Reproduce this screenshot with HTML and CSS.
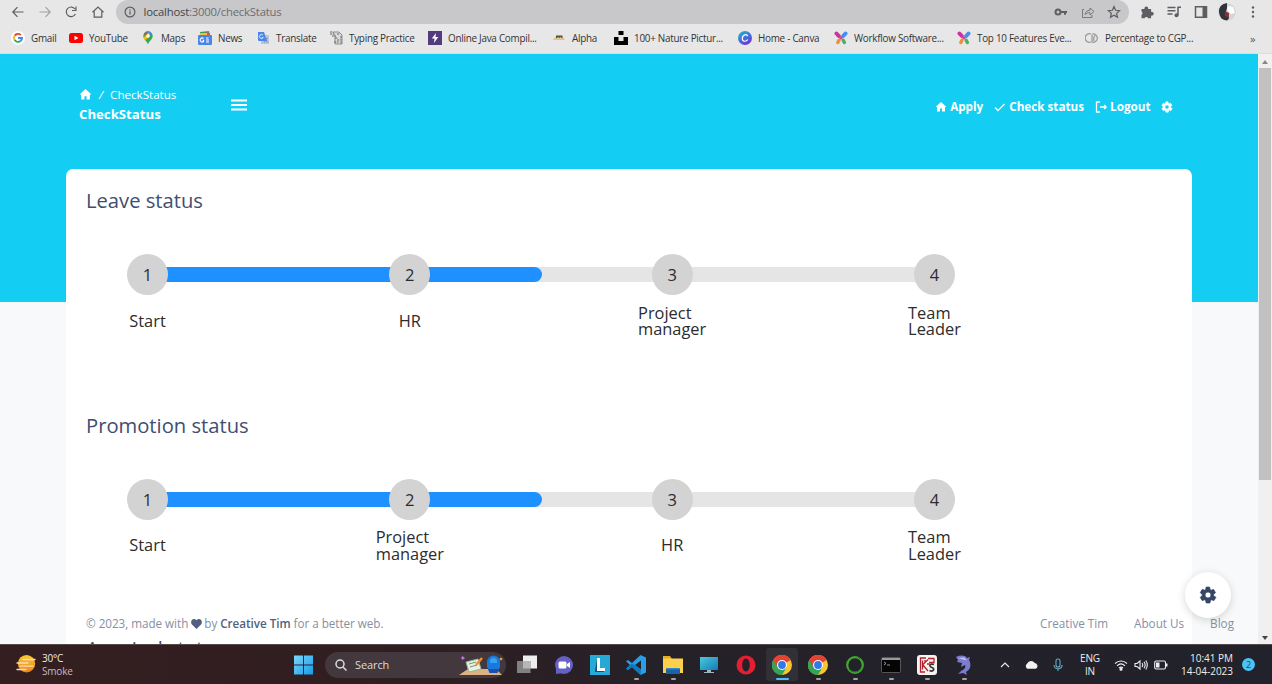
FILE: index.html
```html
<!DOCTYPE html>
<html lang="en">
<head>
<meta charset="utf-8">
<title>CheckStatus</title>
<link rel="stylesheet" href="styles.css">
</head>
<body>
<svg class="defs" width="0" height="0">
  <symbol id="home" viewBox="0 0 24 24"><path fill="currentColor" d="M12 2 1 12h3v9h6v-6h4v6h6v-9h3z"/></symbol>
  <symbol id="gear" viewBox="0 0 24 24"><path fill="currentColor" stroke="currentColor" stroke-width="1" stroke-linejoin="round" d="M19.4 13a7.6 7.6 0 0 0 0-2l2.3-1.7a.5.5 0 0 0 .1-.7l-2.2-3.8a.5.5 0 0 0-.6-.2l-2.7 1a8 8 0 0 0-1.6-1l-.4-2.8a.5.5 0 0 0-.5-.4H9.900a.5.5 0 0 0-.5.4L9 4.600a8 8 0 0 0-1.600 1l-2.700-1a.5.5 0 0 0-.6.2L1.900 8.600a.5.5 0 0 0 .1.700L4.300 11a7.600 7.600 0 0 0 0 2L2 14.700a.5.5 0 0 0-.1.700l2.200 3.800c.1.200.4.300.6.200l2.700-1a8 8 0 0 0 1.600 1l.4 2.800c0 .2.200.4.5.4h4.400c.2 0 .5-.2.5-.4l.4-2.800a8 8 0 0 0 1.600-1l2.700 1c.2.1.5 0 .6-.2l2.200-3.800a.5.5 0 0 0-.1-.7zM12 16a4 4 0 1 1 0-8 4 4 0 0 1 0 8z"/></symbol>
  <symbol id="petals" viewBox="0 0 14 14"><path stroke="#c9359a" stroke-width="4" stroke-linecap="round" d="M2.500 2.500 4.800 5"/><path stroke="#4a8df0" stroke-width="4" stroke-linecap="round" d="M11.500 2.500 9.200 5"/><path stroke="#f58a3c" stroke-width="3.400" stroke-linecap="round" d="M3.800 11.500 5 9.300"/><path stroke="#4dae62" stroke-width="3.400" stroke-linecap="round" d="M10.400 11.500 9.200 9.300"/><circle cx="7" cy="7" r="1.600" fill="#d8478c"/></symbol>
  <symbol id="chrome" viewBox="0 0 20 20"><circle cx="10" cy="10" r="10" fill="#fbc52d"/><path fill="#e34335" d="M10 10 1.300 5A10 10 0 0 1 18.700 5z"/><path fill="#35a554" d="M10 10 1.300 5A10 10 0 0 0 10 20l4.500-7.500z"/><path fill="#e34335" d="M1.300 5 5.700 12.500 10 5h8.700A10 10 0 0 0 1.300 5z"/><circle cx="10" cy="10" r="5" fill="#fff"/><circle cx="10" cy="10" r="3.900" fill="#3178e8"/></symbol>
</svg>

<header class="browser">
  <div class="toolbar">
    <div class="nav">
      <svg viewBox="0 0 14 14"><path d="M12.500 7H2M6.500 2.200 1.800 7l4.700 4.800"/></svg>
      <svg class="faded" viewBox="0 0 14 14"><path d="M1.500 7H12M7.500 2.200 12.200 7l-4.700 4.800"/></svg>
      <svg viewBox="0 0 14 14"><path d="M11.400 9A4.800 4.800 0 1 1 11 4M12 1.500v4H8"/></svg>
      <svg viewBox="0 0 14 14"><path d="M1.500 7.300 7 2l5.500 5.300M3.200 6.500v5.700h7.600V6.500"/></svg>
    </div>
    <div class="address">
      <svg class="info" viewBox="0 0 12 12"><circle cx="6" cy="6" r="4.900"/><path d="M6 5.300v3.300M6 3.200v1.200"/></svg>
      <span class="host">localhost</span><span class="path">:3000/checkStatus</span>
      <div class="address-icons">
        <svg viewBox="0 0 14 14"><circle cx="4" cy="7" r="2.500" stroke-width="2"/><path stroke-width="2" d="M6.500 7H13M11 7v2.700"/></svg>
        <svg class="thin" viewBox="0 0 14 14"><path d="M3 4.500H1.500v8h9.500V10M4 9.500C4.500 6.500 6.300 5.400 9 5.300V3l4 3.500-4 3.500V7.700C7 7.600 5.400 8 4 9.500z"/></svg>
        <svg viewBox="0 0 14 14"><path d="m7 1.600 1.600 3.700 4 .4-3 2.700.9 3.900L7 10.200l-3.500 2.100.9-3.900-3-2.700 4-.4z"/></svg>
      </div>
    </div>
    <div class="tools">
      <svg viewBox="0 0 14 14"><path class="solid" d="M1.500 4h3a1.900 1.900 0 1 1 3.600 0h3v3a1.900 1.900 0 1 1 0 3.500v2.700H8.200a1.900 1.900 0 0 0-3.600 0H1.500V9.800a1.900 1.900 0 0 0 0-3.300z"/></svg>
      <svg viewBox="0 0 14 14"><path stroke-width="1.500" d="M.5 2.500h8M.5 5.700h8M.5 9h5M11 10V2.300h3"/><circle class="solid" cx="9.500" cy="10.300" r="2"/></svg>
      <svg viewBox="0 0 14 14"><path stroke-width="1.500" d="M1.500 1.700h11v10.600h-11z"/><path class="solid" d="M8.500 1.500h4v11h-4z"/></svg>
      <svg class="avatar" viewBox="0 0 18 18"><circle cx="9" cy="9" r="9" fill="#d3d6d8"/><path fill="#30343b" d="M9 0C0 1-1 10 4 16c4 2 6 2 7-1l-3-6 1-4z"/><path fill="#8d302f" d="m7 8 4 2v5l-4-2z"/><path fill="#fff" d="m10 3 5 1 2 6-4 1-4-4z"/></svg>
      <svg viewBox="0 0 14 14"><circle class="solid" cx="7" cy="2.500" r="1.200"/><circle class="solid" cx="7" cy="7" r="1.200"/><circle class="solid" cx="7" cy="11.500" r="1.200"/></svg>
    </div>
  </div>
  <nav class="bookmarks">
    <a><svg viewBox="0 0 14 14"><circle cx="7" cy="7" r="7" fill="#fff"/><g fill="none" stroke-width="1.900"><path stroke="#e44b3c" d="M3.700 4.600A4 4 0 0 1 9.800 4.100"/><path stroke="#f4b92c" d="M3.700 9.100a4 4 0 0 1 0-4.500"/><path stroke="#34a853" d="M3.700 9.100a4 4 0 0 0 5.900.9"/><path stroke="#4285f4" d="M9.600 10A4 4 0 0 0 11 7H7"/></g></svg>Gmail</a>
    <a><svg viewBox="0 0 14 14"><rect y="2" width="14" height="10" rx="2.500" fill="#f00"/><path fill="#fff" d="m5.500 4.700 4 2.300-4 2.300z"/></svg>YouTube</a>
    <a><svg viewBox="0 0 14 14"><path fill="#34a853" d="M7 13.500C6 10 2.300 8.500 2.300 5A4.700 4.700 0 0 1 11.700 5C11.700 8.500 8 10 7 13.500z"/><path fill="#4285f4" d="M5 .8A4.700 4.700 0 0 1 11.200 3L7 6z"/><path fill="#ea4335" d="M5 .8A4.700 4.700 0 0 0 2.800 3L6 5z"/><path fill="#fbbc04" d="M2.500 6.500 8 1.500 9 5 4 9.500z"/><circle cx="7" cy="5" r="1.700" fill="#fff"/></svg>Maps</a>
    <a><svg viewBox="0 0 14 14"><path fill="#36a05a" d="m2 1 9-1 1 5H2z"/><path fill="#e35543" d="m7 1 5 1v3H6z"/><path fill="#f3bd42" d="M2 2h7v3H2z"/><rect y="4" width="14" height="10" rx="1" fill="#4a86e8"/><path fill="none" stroke="#fff" stroke-width="1.100" d="M5.500 7.500a2 2 0 1 0 0 3V9.200H4.500M8 7h2.500M8 9h3M8 11h3"/></svg>News</a>
    <a><svg viewBox="0 0 14 14"><rect x="5" y="4" width="8" height="9" rx="1" fill="#b8c4dc"/><path fill="#4d86e8" d="M2 1h6l3 9H3a1 1 0 0 1-1-1z"/><path stroke="#fff" fill="none" stroke-width=".8" d="M7 4.200a2 2 0 1 0 .2 2.300H5.800"/><path stroke="#6c89b8" fill="none" d="M8.500 7.500h3M10 7v1c0 2-1 3-2 3M9 8.500l3 3"/></svg>Translate</a>
    <a><svg viewBox="0 0 14 14"><path fill="#dcdcdc" stroke="#777" stroke-width=".8" d="M4 1h6l3 3v9H6V5z"/><path stroke="#666" fill="none" d="M1 1h3M1 3h4M3 5h4M8 3h3M6 7h3M8 9h3M5 11h5M12 5v8" stroke-dasharray="2 .7"/></svg>Typing Practice</a>
    <a><svg viewBox="0 0 14 14"><rect width="14" height="14" fill="#553b7d"/><path fill="#fff" d="M8 2 3.800 7.500h2.700L6 12l4.300-6H7.500z"/></svg>Online Java Compil...</a>
    <a><svg viewBox="0 0 14 14"><path fill="#eac27d" d="M1 9c1-2 3-4 6-4s5 2 6 4z"/><path fill="#54504c" d="M4 4.500h6.500V7H9.500L8.500 5.700 7.500 7 6 6 5 7H4z"/></svg>Alpha</a>
    <a><svg viewBox="0 0 14 14"><path d="M4.500 0h5v4h-5zM0 6h4.500v4h5V6H14v8H0z"/></svg>100+ Nature Pictur...</a>
    <a><svg viewBox="0 0 14 14"><defs><linearGradient id="cv" x1="0" y1="0" x2=".6" y2="1"><stop stop-color="#15bfd0"/><stop offset="1" stop-color="#6c35dc"/></linearGradient></defs><circle cx="7" cy="7" r="7" fill="url(#cv)"/><path stroke="#fff" stroke-width="1.200" fill="none" d="M9.500 5.200C9.500 2.500 4.300 3.500 4.300 7.500c0 3.500 4 3.500 5.500 1"/></svg>Home - Canva</a>
    <a><svg><use href="#petals"/></svg>Workflow Software...</a>
    <a><svg><use href="#petals"/></svg>Top 10 Features Eve...</a>
    <a><svg viewBox="0 0 14 14"><g fill="none" stroke="#999" stroke-width="1.300"><path d="M6 3a4.300 4.300 0 1 0 0 8M7 3.500v8M7.500 3a4.200 4.200 0 1 1 0 8.300M10 4.500C8.500 6 8.500 8 9 10"/></g></svg>Percentage to CGP...</a>
    <span class="more">»</span>
  </nav>
</header>

<div class="viewport">
  <main class="page">
    <div class="topbar">
      <div class="crumbs">
        <div class="trail"><svg><use href="#home"/></svg><i>/</i><span>CheckStatus</span></div>
        <strong>CheckStatus</strong>
      </div>
      <svg class="burger" viewBox="0 0 16 12"><path stroke="#fff" stroke-width="2" d="M0 1.500h16M0 6h16M0 10.500h16"/></svg>
      <nav class="menu">
        <a><svg><use href="#home"/></svg>Apply</a>
        <a class="check"><svg viewBox="0 0 12 12"><path d="m1 6.500 3 3L10.500 3"/></svg>Check status</a>
        <a><svg viewBox="0 0 12 12"><path d="M5 1H1.500v10H5M5 6h6M9.200 4l2 2-2 2"/></svg>Logout</a>
        <a><svg class="cog"><use href="#gear"/></svg></a>
      </nav>
    </div>

    <section class="card">
      <article class="status">
        <h2>Leave status</h2>
        <ol class="steps">
          <li><b>1</b><span>Start</span></li>
          <li><b>2</b><span>HR</span></li>
          <li><b>3</b><span>Project<br>manager</span></li>
          <li><b>4</b><span>Team<br>Leader</span></li>
        </ol>
      </article>
      <article class="status">
        <h2>Promotion status</h2>
        <ol class="steps">
          <li><b>1</b><span>Start</span></li>
          <li><b>2</b><span>Project<br>manager</span></li>
          <li><b>3</b><span>HR</span></li>
          <li><b>4</b><span>Team<br>Leader</span></li>
        </ol>
      </article>
      <article class="status">
        <h2 class="last">Apprisal status</h2>
      </article>
    </section>

    <footer class="footer">
      <p>© 2023, made with <svg viewBox="0 0 12 11"><path fill="currentColor" d="M6 11 1 6C-1.500 3 1.500-1.500 5 .6L6 1.500 7 .6C10.500-1.500 13.500 3 11 6z"/></svg> by <b>Creative Tim</b> for a better web.</p>
      <nav><a>Creative Tim</a><a>About Us</a><a>Blog</a></nav>
    </footer>
    <button class="settings"><svg><use href="#gear"/></svg></button>
  </main>
  <div class="scrollbar"><i class="up"></i><i class="thumb"></i><i class="down"></i></div>
</div>

<div class="taskbar">
  <div class="weather">
    <svg viewBox="0 0 20 20"><defs><linearGradient id="sun" x1="0" y1="0" x2="0" y2="1"><stop stop-color="#fcc832"/><stop offset="1" stop-color="#ed841c"/></linearGradient></defs><circle cx="10.500" cy="8.700" r="8.700" fill="url(#sun)"/><path stroke="#f8ddb4" stroke-width="1.300" stroke-linecap="round" d="M7 4.500h12M1 8h11M4 11.200h13M1 14.500h9"/></svg>
    <div>30°C<br><span>Smoke</span></div>
  </div>
  <svg class="start" viewBox="0 0 20 20"><defs><linearGradient id="win" x1="0" y1="0" x2="1" y2="1"><stop stop-color="#7ad8fb"/><stop offset="1" stop-color="#169bea"/></linearGradient></defs><path fill="url(#win)" d="M0 0h9.500v9.500H0zM10.500 0H20v9.500h-9.500zM0 10.500h9.500V20H0zM10.500 10.500H20V20h-9.500z"/></svg>
  <div class="search">
    <svg class="lens" viewBox="0 0 12 12"><circle cx="5" cy="5" r="4"/><path d="m8 8 3.500 3.500"/></svg>Search
    <svg class="art" viewBox="0 0 44 22"><path fill="#dbb383" d="m0 21 9-6h28l6 6z"/><path fill="#e9f0e4" stroke="#9ab39c" d="m7 8 12-3 3 10-12 3z"/><path stroke="#6c9a70" d="m10 10 7-2M11 13l7-2"/><path stroke="#f08d37" stroke-width="2.500" d="m23 4-6 7"/><rect x="28" y="1.500" width="13" height="17" rx="6.500" fill="#1878de"/><path fill="#3a9ff0" d="M31 6q3.500-5 7 0v3h-7z"/><path fill="#194fb0" d="M29 15h11l-1.500 4h-8z"/><path fill="#c86ce0" d="m2 4 1.500-2L6 4 3.500 6z"/><circle cx="42" cy="5" r="1.300" fill="#ee9d35"/></svg>
  </div>
  <div class="apps">
    <i><svg viewBox="0 0 20 20"><path fill="#eee" d="M6 .5h14v13H6z"/><path fill="#818181" d="M0 6h13.500v12H0z"/><path fill="#b7b7b7" d="M6 6h7.500v7.500H6z"/></svg></i>
    <i><svg viewBox="0 0 20 20"><circle cx="10" cy="10" r="9" fill="#6660c4"/><path fill="#6660c4" d="M2 11v8l7-1z"/><rect x="4.500" y="6.500" width="8" height="7" rx="1.500" fill="#fff"/><path fill="#fff" d="m13 9 3-2v6l-3-2z"/></svg></i>
    <i><svg viewBox="0 0 20 20"><path fill="#26a9d6" d="M0 0h20v20H0z"/><path fill="#174f72" d="M5 16 7 4v11h7v2H5z"/><path fill="#fff" d="M7 3h3v10h5v3H7z"/></svg></i>
    <i class="run"><svg viewBox="0 0 20 20"><path fill="#279fe5" d="m14.500 0 5.500 2.500v15L14.500 20 6 12l-4 3-2-1.200L4 10 0 6.200 2 5l4 3zM15 5.500 9 10l6 4.500z"/><path fill="#1277bd" d="m0 13.800 6-5.600L15 14.500 14.500 20 6 12l-4 3z"/></svg></i>
    <i class="run"><svg viewBox="0 0 20 20"><path fill="#e9a927" d="M0 1h7l2 3H0z"/><path fill="#fbd04c" d="M0 3.500h20V18H0z"/><path fill="#1765a7" d="M3 19v-5l1-1h12l1 1v5z"/><path fill="#2f86c8" d="M4 13h12v1.500H4z"/></svg></i>
    <i><svg viewBox="0 0 20 20"><defs><linearGradient id="pc" x1="0" y1="0" x2="1" y2="1"><stop stop-color="#48cbd9"/><stop offset="1" stop-color="#1679ba"/></linearGradient></defs><path fill="url(#pc)" d="M1 2h18v13H1z"/><path fill="#a0b7c3" d="M8 15h4v2h3v1H5v-1h3z"/></svg></i>
    <i><svg viewBox="0 0 20 20"><path fill="#e41f31" fill-rule="evenodd" d="M10 .5a9.500 9.500 0 1 0 0 19 9.500 9.500 0 0 0 0-19zM10 3.500c2.300 0 3.800 3 3.800 6.500s-1.500 6.500-3.800 6.500S6.200 13.500 6.200 10 7.700 3.500 10 3.500z"/></svg></i>
    <i class="run on"><svg><use href="#chrome"/></svg></i>
    <i class="run"><svg><use href="#chrome"/></svg></i>
    <i class="run"><svg viewBox="0 0 20 20"><circle cx="10" cy="10" r="7.800" fill="none" stroke="#43a833" stroke-width="2.200"/><path stroke="#286e24" stroke-width="1" fill="none" d="M4 14c3 4 10 4 12-1M12 1l3 3"/></svg></i>
    <i class="run"><svg viewBox="0 0 20 20"><rect x=".5" y="2.500" width="19" height="15" rx="1" fill="#050505" stroke="#555"/><path fill="#999" d="M1 3h18v2H1z"/><path stroke="#bbb" stroke-width=".8" fill="none" d="m3 7 2 1.500L3 10M6 10h3"/></svg></i>
    <i class="run"><svg viewBox="0 0 20 20"><rect width="20" height="20" rx="3" fill="#f6f2f1"/><path stroke="#b4232c" stroke-width="1.300" fill="none" d="M9 3H3.500v14H8M5.500 5.500v9M5.500 10 11 4.500M6 10l5 6M11 3.500h6v4h-5M8 5v3M10 9h2.500"/><path stroke="#333" stroke-width="1.700" fill="none" d="M17 9.500c-4-1.500-5.500 1.500-2.500 2.700 4 1.300 2 5-2 3.300"/></svg></i>
    <i class="run"><svg viewBox="0 0 20 20"><path fill="#7b7bd0" d="M2 2c4-2 9-2 11 1l3-1-1 3c3 5 1 10-3 12l1 3-4-2-5 1 3-3c4-2 5-4 4-6l-4 2 1-4-5-1 1-2z"/><path fill="#c6c6f1" d="m4 3 6-.5 3 3-4-1z"/></svg></i>
  </div>
  <div class="tray">
    <svg class="chev" viewBox="0 0 12 12"><path d="m2 8 4-4 4 4"/></svg>
    <svg class="cloud" viewBox="0 0 14 12"><path fill="#f2f2f2" d="M3 10a3 3 0 0 1 0-5 4 4 0 0 1 7-.3A2.800 2.800 0 0 1 11 10z"/></svg>
    <svg class="mic" viewBox="0 0 12 14"><rect x="4" y="1" width="4" height="8" rx="2"/><path d="M2 7c0 5 8 5 8 0M6 10.500V13"/></svg>
    <div class="lang">ENG<br>IN</div>
    <svg class="wifi" viewBox="0 0 14 12"><path d="M1 4.500c3.500-3.300 8.500-3.300 12 0M3 6.800c2.400-2.300 5.600-2.300 8 0M5 9c1.300-1.200 2.700-1.200 4 0"/><circle cx="7" cy="10.300" r="1" fill="#eee"/></svg>
    <svg class="vol" viewBox="0 0 14 12"><path d="M1 4.500h2L6 2v8L3 7.500H1zM8 4q1.500 2 0 4M10 2.800q2.300 3.200 0 6.400M11.800 1.500q3 4.500 0 9"/></svg>
    <svg class="bat" viewBox="0 0 14 12"><rect x=".7" y="2" width="10.800" height="8" rx="1.500"/><path fill="#eee" stroke="none" d="M2 3.500h3.500v5H2zM12 4.500h1.500v3H12z"/></svg>
    <div class="clock">10:41 PM<br>14-04-2023</div>
    <span class="badge">2</span>
  </div>
</div>
</body>
</html>
```

FILE: styles.css
```css
* { box-sizing: border-box; }
body { margin: 0; width: 1272px; height: 684px; overflow: hidden; display: flex; flex-direction: column; font-family: "Open Sans", "Noto Sans", sans-serif; }
svg { display: block; flex: none; }
.defs { position: absolute; }
a, button { color: inherit; }

/* Browser chrome */
.browser { height: 54px; flex: none; background: #e7e7e8; color: #333; border-bottom: 1px solid #d7dfe2; }
.toolbar { height: 23px; display: flex; align-items: center; }
.toolbar svg { fill: none; stroke: #5c5e61; stroke-width: 1.2; }
.toolbar .thin { stroke: #77797b; stroke-width: 1; }
.toolbar .solid { fill: #5c5e61; stroke: none; }
.nav { display: flex; gap: 12.5px; padding-left: 11px; width: 116px; }
.nav svg { width: 14px; height: 14px; }
.nav .faded { opacity: .5; }
.address { width: 1013px; height: 24px; display: flex; align-items: center; background: #c8c8ca; border-radius: 12px; padding: 0 8px; font-size: 11.3px; letter-spacing: -.2px; }
.info { width: 12px; height: 12px; margin-right: 7.5px; }
.host { color: #434548; }
.path { color: #6b6d70; }
.address-icons { margin-left: auto; display: flex; gap: 12.5px; }
.address-icons svg { width: 14px; height: 14px; }
.tools { display: flex; align-items: center; padding-left: 11px; gap: 13px; }
.tools > svg { width: 14px; height: 14px; }
.tools > .avatar { width: 18px; height: 18px; stroke: none; margin: 0 -3px; border-radius: 50%; }
.bookmarks { height: 30px; padding-left: 11px; display: grid; align-items: center; grid-template-columns: 58px 72px 57px 58px 73px 99px 124px 62px 124px 96px 123px 128px 165px 12px; font-size: 9.9px; letter-spacing: -.26px; white-space: nowrap; }
.bookmarks a { display: flex; align-items: center; gap: 6px; }
.bookmarks svg { width: 14px; height: 14px; }
.more { font-size: 11px; color: #555; }

/* Page */
.viewport { flex: 1; min-height: 0; display: flex; overflow: hidden; }
.page { position: relative; width: 1258px; height: 590px; overflow: hidden; padding: 0 66px; background: linear-gradient(#13cef2 248px, #f8f9fb 248px); }
.topbar { height: 115px; padding: 31px 19px 0 13px; display: flex; align-items: flex-start; color: #fff; }
.crumbs { width: 152px; font-size: 12.5px; line-height: 19px; }
.crumbs strong { display: block; font-size: 13.2px; line-height: 20px; }
.trail { display: flex; align-items: center; font-size: 11.6px; }
.trail svg { width: 13px; height: 13px; }
.trail i { margin: 0 7px; }
.burger { width: 16px; height: 12px; margin-top: 14px; }
.menu { margin-left: auto; margin-top: 12px; display: flex; gap: 10.5px; font-size: 11.7px; line-height: 19px; font-weight: 700; }
.menu a { display: flex; align-items: center; gap: 3.5px; }
.menu svg { width: 12px; height: 12px; fill: none; stroke: #fff; stroke-width: 1.3; }
.menu use { stroke: none; }
.card { height: 640px; background: #fff; border-radius: 7px 7px 0 0; padding: 20px 20px 0; }
.status { height: 224.5px; }
.status h2 { margin: 0; font-size: 20.2px; line-height: 22px; font-weight: 400; color: #404e70; }
.status .last { line-height: 21px; }
.steps { list-style: none; margin: 43px 0 0 41px; padding: 0; width: 828px; height: 90px; display: flex; justify-content: space-between; background: linear-gradient(90deg, #1e90ff, #1e90ff) 20px 13px / 387px 15px no-repeat, linear-gradient(#e5e5e5, #e5e5e5) 20px 13px / 788px 15px no-repeat; position: relative; }
.steps::before { content: ""; position: absolute; left: 400px; top: 13px; width: 15px; height: 15px; border-radius: 0 8px 8px 0; background: #1e90ff; }
.steps li { width: 41px; display: flex; flex-direction: column; align-items: center; color: #2c2c2c; }
.steps b { width: 41px; height: 41px; border-radius: 50%; background: #d3d3d3; display: grid; place-items: center; font-size: 16.5px; font-weight: 400; position: relative; }
.steps span { width: max-content; height: 34px; margin-top: 9px; display: grid; align-content: center; font-size: 16.4px; line-height: 16.5px; }
.footer { position: absolute; left: 86px; right: 24px; top: 559px; display: flex; justify-content: space-between; font-size: 11.7px; line-height: 20px; color: #8590a6; }
.footer p { margin: 0; letter-spacing: -.04px; }
.footer p svg { display: inline-block; width: 11px; height: 10px; margin: 0 -.5px; color: #525f7f; vertical-align: -1px; }
.footer b { font-weight: 600; color: #525f7f; }
.footer nav { display: flex; gap: 26px; }
.settings { position: absolute; left: 1185px; top: 518px; width: 46px; height: 46px; border: 0; border-radius: 50%; background: #fff; box-shadow: 0 2px 8px rgba(0, 0, 0, .16); display: grid; place-items: center; padding: 0; color: #344767; }
.settings svg { width: 18px; height: 18px; }
.scrollbar { width: 14px; background: #f0f0f1; display: flex; flex-direction: column; align-items: center; padding: 6px 0 4px; }
.up, .down { border: 3.5px solid transparent; border-top: 0; border-bottom: 4px solid #888; }
.down { border-bottom: 0; border-top: 4px solid #444; margin-top: auto; }
.thumb { width: 12px; height: 412px; margin-top: 4px; background: #c1c1c1; }

/* Taskbar */
.taskbar { height: 40px; flex: none; display: flex; align-items: center; color: #eee; background: linear-gradient(90deg, #341e20, #311e20 28%, #252128 52%, #21222b); border-top: 1px solid #55494c; font-size: 10px; }
.weather { width: 294px; padding-left: 16px; display: flex; align-items: center; gap: 6px; line-height: 13px; letter-spacing: -.2px; }
.weather svg { width: 20px; height: 20px; }
.weather span { color: #c5bcbc; }
.start { width: 19px; height: 20px; }
.search { width: 181px; height: 26px; margin-left: 12px; padding: 0 1px 0 10px; border-radius: 13px; background: #42383d; display: flex; align-items: center; font-size: 11px; letter-spacing: -.1px; color: #ddd; }
.lens { width: 12px; height: 12px; margin-right: 8px; fill: none; stroke: #ddd; stroke-width: 1.5; }
.art { width: 44px; height: 22px; margin-left: auto; margin-right: 2px; fill: none; }
.apps { display: flex; margin-left: 3px; width: 473px; }
.apps i { width: 36.4px; height: 39px; display: grid; place-items: center; position: relative; }
.apps svg { width: 20px; height: 20px; position: relative; }
.run::after { content: ""; position: absolute; left: 16px; bottom: 4px; width: 5px; height: 2px; border-radius: 1px; background: #a8a1a5; }
.on::before { content: ""; position: absolute; left: 2px; top: 3px; width: 32px; height: 33px; border-radius: 3px; background: #313037; }
.on::after { left: 12px; width: 13px; background: #4cc2f4; }
.tray { flex: 1; display: flex; align-items: center; padding-left: 17px; line-height: 13px; }
.tray svg { fill: none; stroke: #eee; stroke-width: 1.1; }
.chev { width: 12px; height: 12px; }
.tray .cloud { width: 15px; height: 13px; margin-left: 13px; stroke: none; }
.tray .mic { width: 12px; height: 14px; margin-left: 13px; stroke: #63abc0; }
.lang { width: 30px; margin-left: 11px; text-align: center; letter-spacing: -.2px; }
.wifi, .vol, .bat { width: 14px; height: 12px; }
.wifi { margin-left: 9px; }
.vol { margin-left: 6px; }
.bat { margin-left: 6px; }
.clock { margin-left: 9px; width: 56px; text-align: right; letter-spacing: -.02px; white-space: nowrap; }
.badge { width: 13px; height: 13px; margin-left: 9px; border-radius: 50%; background: #4cc2f4; color: #23404f; font-size: 9px; line-height: 13px; text-align: center; }
```
